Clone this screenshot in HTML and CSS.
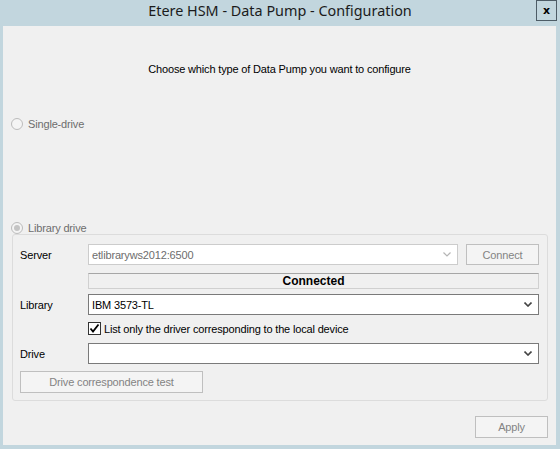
FILE: index.html
```html
<!DOCTYPE html>
<html lang="en">
<head>
    <meta charset="UTF-8">
    <title>Etere HSM - Data Pump - Configuration</title>
    <link rel="stylesheet" href="styles.css">
</head>
<body>
    <div class="window">
        <div class="titlebar">
            <span class="title">Etere HSM - Data Pump - Configuration</span>
            <button class="close-btn" aria-label="Close">x</button>
        </div>

        <div class="client">
            <p class="prompt">Choose which type of Data Pump you want to configure</p>

            <label class="radio-row single">
                <span class="radio"></span>
                <span>Single-drive</span>
            </label>

            <label class="radio-row library">
                <span class="radio checked"></span>
                <span>Library drive</span>
            </label>

            <div class="group">
                <div class="row server-row">
                    <span class="field-label">Server</span>
                    <div class="combo disabled server-combo">
                        <span>etlibraryws2012:6500</span>
                        <svg class="chevron" width="8" height="5" viewBox="0 0 8 5"><polyline points="0.5,0.5 4,4 7.5,0.5" fill="none" stroke="currentColor" stroke-width="1.2"/></svg>
                    </div>
                    <button class="btn disabled connect-btn">Connect</button>
                </div>

                <div class="status">Connected</div>

                <div class="row library-row">
                    <span class="field-label">Library</span>
                    <div class="combo wide">
                        <span>IBM 3573-TL</span>
                        <svg class="chevron" width="8" height="5" viewBox="0 0 8 5"><polyline points="0.5,0.5 4,4 7.5,0.5" fill="none" stroke="currentColor" stroke-width="1.6"/></svg>
                    </div>
                </div>

                <label class="check-row">
                    <span class="checkbox">
                        <svg width="11" height="11" viewBox="0 0 11 11"><polyline points="1.5,5.5 4,8.5 9.5,1.5" fill="none" stroke="#000" stroke-width="1.8"/></svg>
                    </span>
                    <span>List only the driver corresponding to the local device</span>
                </label>

                <div class="row drive-row">
                    <span class="field-label">Drive</span>
                    <div class="combo wide">
                        <span></span>
                        <svg class="chevron" width="8" height="5" viewBox="0 0 8 5"><polyline points="0.5,0.5 4,4 7.5,0.5" fill="none" stroke="currentColor" stroke-width="1.6"/></svg>
                    </div>
                </div>

                <button class="btn disabled test-btn">Drive correspondence test</button>
            </div>

            <div class="footer">
                <button class="btn disabled apply-btn">Apply</button>
            </div>
        </div>
    </div>
</body>
</html>
```

FILE: styles.css
```css
* {
    margin: 0;
    padding: 0;
    box-sizing: border-box;
}

body {
    width: 560px;
    height: 449px;
    background-color: #c2d6de;
    font-family: "Liberation Sans", Arial, sans-serif;
    font-size: 11px;
    letter-spacing: -0.16px;
    color: #000;
    overflow: hidden;
}

.window {
    display: flex;
    flex-direction: column;
    height: 449px;
}

/* Title bar */
.titlebar {
    display: grid;
    grid-template-columns: 1fr auto 1fr;
    align-items: start;
    height: 26px;
}

.title {
    grid-column: 2;
    font-family: "Noto Sans", "Open Sans", sans-serif;
    font-size: 14.4px;
    letter-spacing: 0;
    line-height: 22px;
    color: #1b1b1b;
}

.close-btn {
    grid-column: 3;
    justify-self: end;
    width: 21px;
    height: 21px;
    margin-right: 3px;
    border: 1px solid #4d5c66;
    background: transparent;
    font-family: "DejaVu Sans", sans-serif;
    font-size: 11px;
    font-weight: bold;
    line-height: 18px;
    color: #000;
}

/* Client area */
.client {
    flex: 1;
    display: flex;
    flex-direction: column;
    margin: 0 4px 4px 3px;
    background-color: #f0f0f0;
}

.prompt {
    margin-top: 36px;
    line-height: 14px;
    text-align: center;
}

.radio-row {
    display: flex;
    align-items: center;
    gap: 5px;
    height: 13px;
    margin-left: 8px;
    color: #6d6d6d;
}

.single {
    margin-top: 41px;
}

.library {
    margin-top: 91px;
}

.radio {
    width: 12px;
    height: 12px;
    border: 1px solid #bcbcbc;
    border-radius: 50%;
    background-color: #f4f4f4;
    display: flex;
    align-items: center;
    justify-content: center;
}

.radio.checked::after {
    content: "";
    width: 6px;
    height: 6px;
    border-radius: 50%;
    background-color: #c4c4c4;
}

/* Group box */
.group {
    display: flex;
    flex-direction: column;
    margin: 0 8px 0 9px;
    height: 167px;
    padding: 9px 8px 0 7px;
    border: 1px solid #dcdcdc;
    border-radius: 3px;
}

.row {
    display: flex;
    align-items: center;
    height: 21px;
}

.field-label {
    width: 68px;
    flex-shrink: 0;
}

.combo {
    display: flex;
    align-items: center;
    justify-content: space-between;
    height: 21px;
    padding: 0 6px 0 3px;
    background-color: #fff;
    border: 1px solid #7a7a7a;
    color: #000;
}

.combo .chevron {
    color: #444;
}

.combo.disabled {
    border-color: #cccccc;
    color: #6d6d6d;
}

.combo.disabled .chevron {
    color: #b5b5b5;
}

.server-combo {
    width: 370px;
}

.wide {
    flex: 1;
}

.btn {
    font-family: inherit;
    font-size: 11px;
    letter-spacing: -0.16px;
    background-color: #f4f4f4;
    border: 1px solid #adadad;
}

.btn.disabled {
    border-color: #bfbfbf;
    color: #838383;
}

.connect-btn {
    width: 73px;
    height: 21px;
    margin-left: 8px;
}

.status {
    height: 16px;
    margin: 8px 0 0 68px;
    border: 1px solid #d0d0d0;
    border-top-color: #a6a6a6;
    font-weight: bold;
    font-size: 12px;
    letter-spacing: 0;
    line-height: 14px;
    text-align: center;
}

.library-row {
    margin-top: 5px;
}

.check-row {
    display: flex;
    align-items: center;
    gap: 3px;
    height: 13px;
    margin: 7px 0 0 68px;
}

.checkbox {
    width: 13px;
    height: 13px;
    border: 1px solid #333;
    background-color: #fff;
    display: flex;
    align-items: center;
    justify-content: center;
}

.drive-row {
    margin-top: 8px;
}

.test-btn {
    width: 183px;
    height: 22px;
    margin-top: 7px;
}

.footer {
    display: flex;
    justify-content: flex-end;
    margin: 15px 8px 0 0;
}

.apply-btn {
    width: 73px;
    height: 22px;
}
```
